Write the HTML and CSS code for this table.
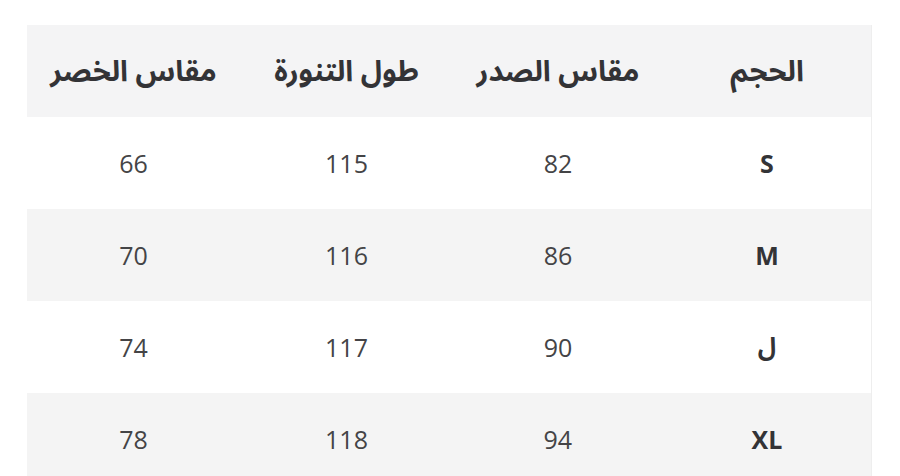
FILE: index.html
```html
<!DOCTYPE html>
<html lang="ar" dir="rtl">
<head>
<meta charset="utf-8">
<link rel="stylesheet" href="styles.css">
</head>
<body>
<div class="wrap">
<table class="size-table">
<thead>
<tr><th>الحجم</th><th>مقاس الصدر</th><th>طول التنورة</th><th>مقاس الخصر</th></tr>
</thead>
<tbody>
<tr><td class="size">S</td><td>82</td><td>115</td><td>66</td></tr>
<tr><td class="size">M</td><td>86</td><td>116</td><td>70</td></tr>
<tr><td class="size">ل</td><td>90</td><td>117</td><td>74</td></tr>
<tr><td class="size">XL</td><td>94</td><td>118</td><td>78</td></tr>
</tbody>
</table>
</div>
</body>
</html>
```
FILE: styles.css
```css
html, body {
  margin: 0;
  padding: 0;
  background: #ffffff;
}
body {
  font-family: "Open Sans", "Noto Sans Arabic", "Noto Sans", "DejaVu Sans", sans-serif;
  color: #38383a;
}
.wrap {
  padding: 25px 28px 0 28px;
}
.size-table {
  width: 844px;
  border-collapse: collapse;
  table-layout: fixed;
  border-right: 1px solid #eeeeee;
}
.size-table th:nth-child(1) { width: 208px; }
.size-table th:nth-child(2) { width: 210px; }
.size-table th:nth-child(3) { width: 212px; }
.size-table th:nth-child(4) { width: 214px; }
.size-table th,
.size-table td {
  height: 92px;
  padding: 0;
  text-align: center;
  vertical-align: middle;
}
.size-table th {
  font-weight: 700;
  font-size: 29px;
  color: #333336;
  background: #f4f4f5;
}
.size-table td {
  font-size: 25px;
  font-weight: 400;
  color: #444446;
}
.size-table td.size {
  font-weight: 700;
  color: #333336;
}
.size-table tbody tr:nth-child(even) td {
  background: #f4f4f4;
}
```
